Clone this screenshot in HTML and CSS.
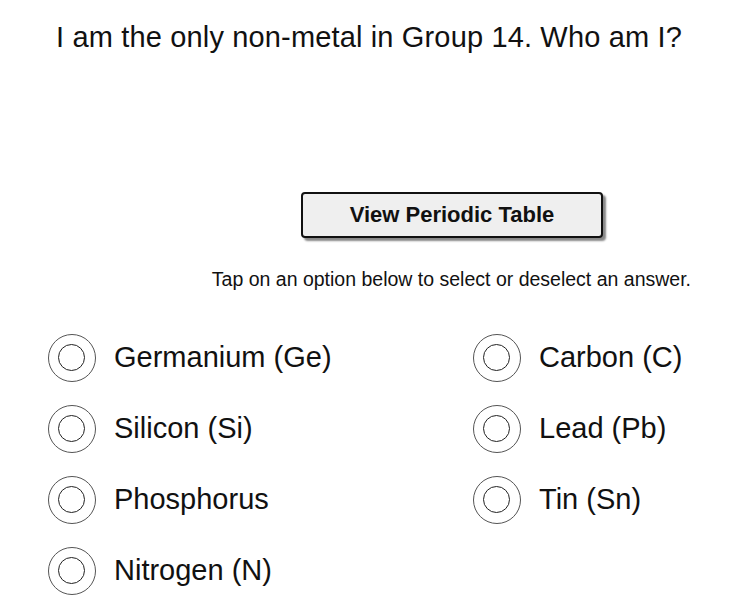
FILE: index.html
```html
<!DOCTYPE html>
<html lang="en">
<head>
    <meta charset="UTF-8">
    <meta name="viewport" content="width=device-width, initial-scale=1.0">
    <title>Group 14 Quiz</title>
    <link rel="stylesheet" href="styles.css">
</head>
<body>
    <div class="quiz">
        <h1 class="question">I am the only non-metal in Group 14. Who am I?</h1>

        <div class="table-link">
            <button class="table-button">View Periodic Table</button>
        </div>

        <p class="hint">Tap on an option below to select or deselect an answer.</p>

        <div class="options">
            <div class="option"><span class="radio"></span>Germanium (Ge)</div>
            <div class="option"><span class="radio"></span>Carbon (C)</div>
            <div class="option"><span class="radio"></span>Silicon (Si)</div>
            <div class="option"><span class="radio"></span>Lead (Pb)</div>
            <div class="option"><span class="radio"></span>Phosphorus</div>
            <div class="option"><span class="radio"></span>Tin (Sn)</div>
            <div class="option"><span class="radio"></span>Nitrogen (N)</div>
        </div>
    </div>
</body>
</html>
```

FILE: styles.css
```css
body {
    margin: 0;
    background-color: white;
    font-family: "Liberation Sans", Arial, sans-serif;
    color: #111;
}
.quiz {
    width: 730px;
}
.question {
    margin: 0;
    padding: 19px 0 0 8px;
    text-align: center;
    font-size: 29px;
    font-weight: normal;
    line-height: 36px;
    letter-spacing: 0.15px;
}
.table-link {
    padding-left: 301px;
    padding-top: 137px;
}
.table-button {
    width: 302px;
    height: 46px;
    border: 2px solid #111;
    border-radius: 4px;
    background-color: #efefef;
    box-shadow: 3px 3px 2px #888;
    font-family: "Liberation Sans", Arial, sans-serif;
    font-size: 22px;
    font-weight: bold;
    color: #111;
}
.hint {
    margin: 29px 39px 0 0;
    text-align: right;
    font-size: 19.5px;
    line-height: 24px;
}
.options {
    display: grid;
    grid-template-columns: 425px 257px;
    padding: 31px 0 0 48px;
}
.option {
    display: flex;
    align-items: center;
    height: 71px;
    font-size: 29px;
}
.radio {
    position: relative;
    width: 46px;
    height: 46px;
    border: 1px solid #555;
    border-radius: 50%;
    margin-right: 18px;
    flex-shrink: 0;
}
.radio::after {
    content: "";
    position: absolute;
    left: 9px;
    top: 9px;
    width: 25px;
    height: 25px;
    border: 1.5px solid #222;
    border-radius: 50%;
}
```
